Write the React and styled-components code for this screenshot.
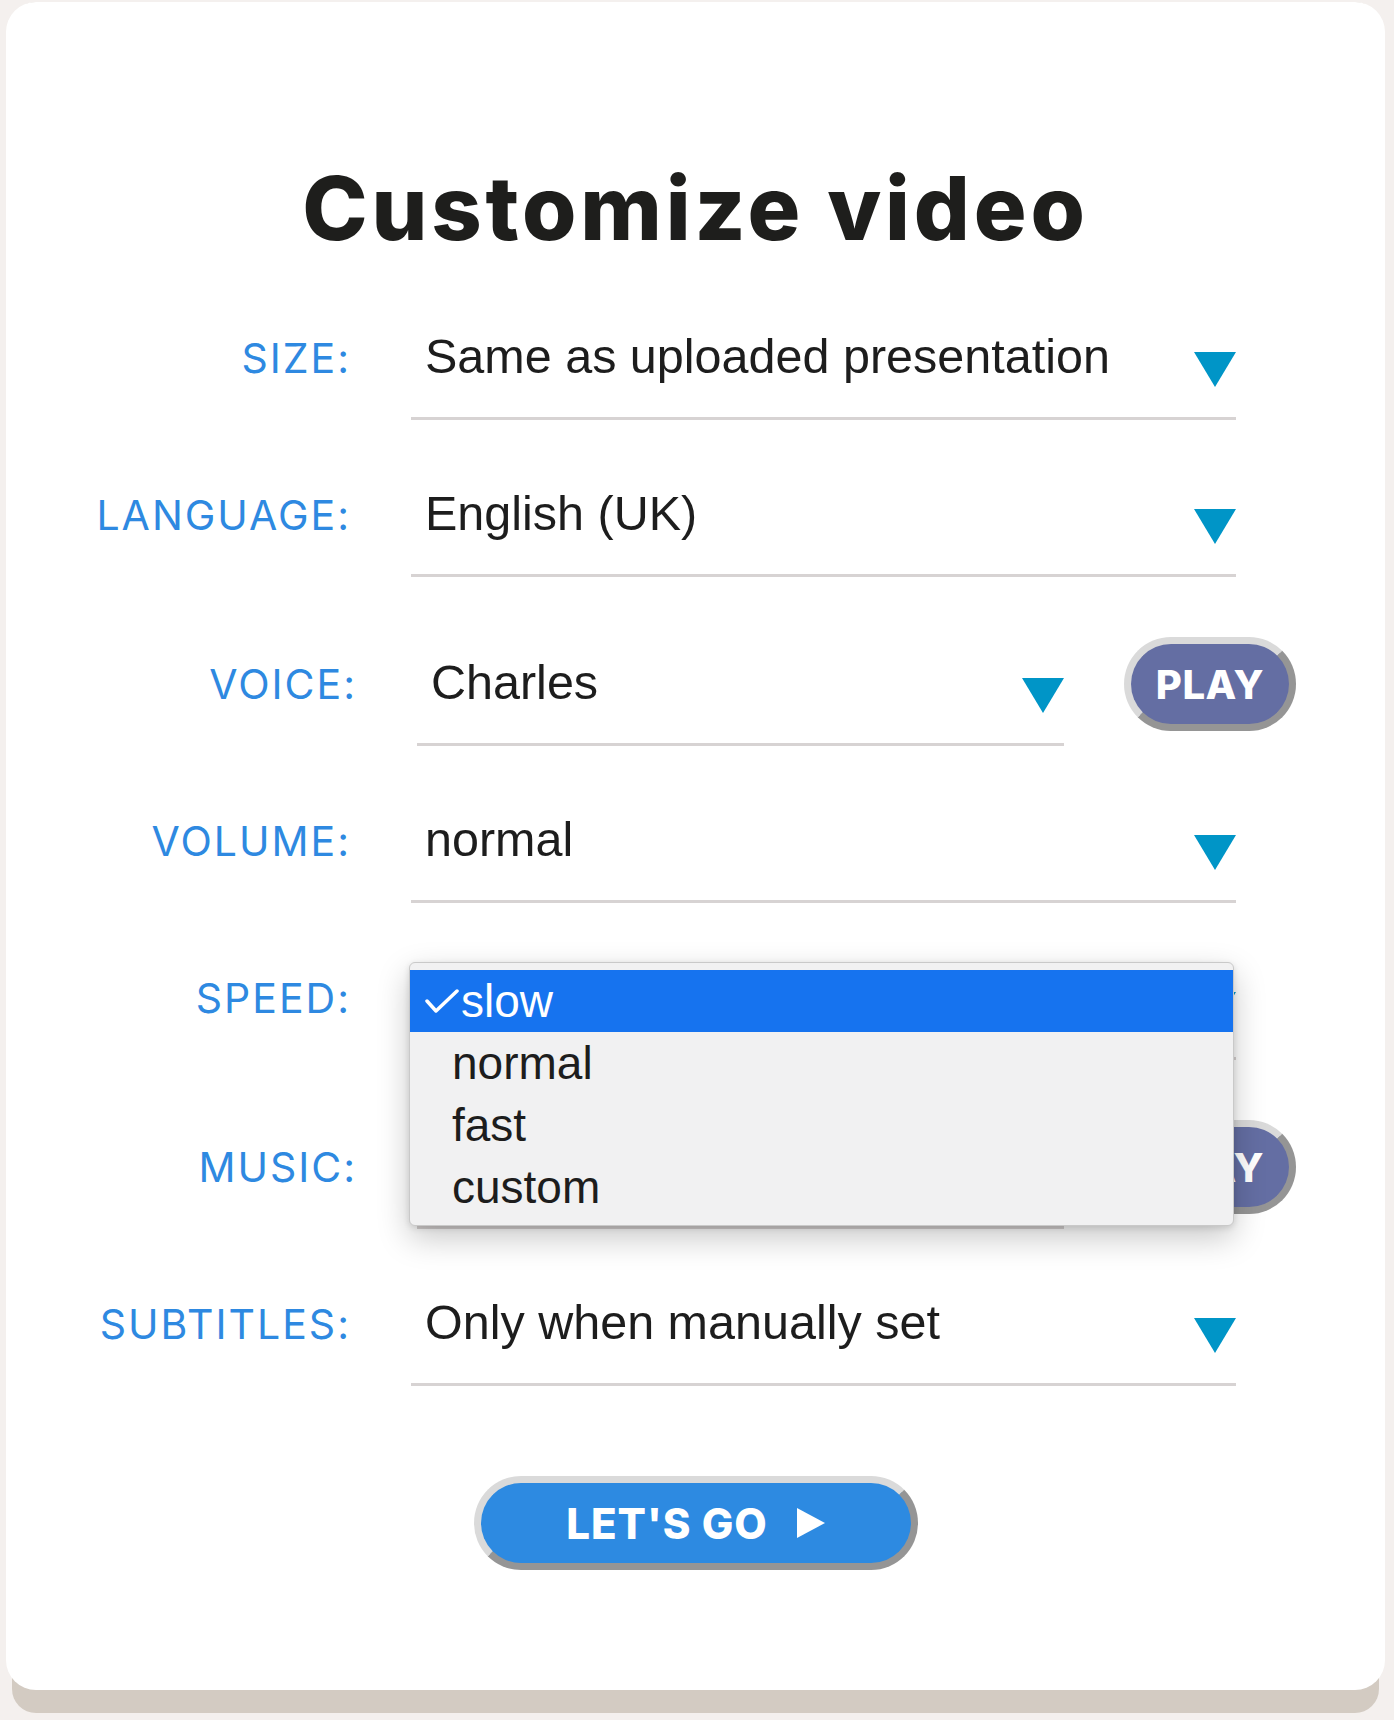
import React from 'react';
import styled, { createGlobalStyle } from 'styled-components';

const GlobalStyle = createGlobalStyle`
  html, body {
    margin: 0;
    padding: 0;
    background: #f4f0ee;
  }
  * {
    box-sizing: border-box;
  }
`;

const rows = [
  { label: 'SIZE:', value: 'Same as uploaded presentation' },
  { label: 'LANGUAGE:', value: 'English (UK)' },
  { label: 'VOICE:', value: 'Charles', play: true },
  { label: 'VOLUME:', value: 'normal' },
  { label: 'SPEED:', value: 'slow', options: ['slow', 'normal', 'fast', 'custom'] },
  { label: 'MUSIC:', value: 'Calm piano', play: true },
  { label: 'SUBTITLES:', value: 'Only when manually set' },
];

const Arrow = () => (
  <ArrowSvg viewBox="0 0 42 35">
    <polygon points="0,0 42,0 21,35" fill="#0095c7" />
  </ArrowSvg>
);

const Check = () => (
  <CheckSvg viewBox="0 0 34 24">
    <polyline
      points="2,12 11,22 32,2"
      fill="none"
      stroke="#ffffff"
      strokeWidth="3.5"
      strokeLinecap="round"
      strokeLinejoin="round"
    />
  </CheckSvg>
);

const App = () => {
  return (
    <>
      <GlobalStyle />
      <CardBase>
        <Card>
          <Title>Customize video</Title>
          <Form>
            {rows.map((row) => (
              <Row key={row.label} $play={row.play}>
                <Label>{row.label}</Label>
                <Select $play={row.play}>
                  <Value>{row.value}</Value>
                  <Arrow />
                  {row.options && (
                    <Menu>
                      {row.options.map((opt) => (
                        <Option key={opt} $selected={opt === row.value}>
                          {opt === row.value && <Check />}
                          {opt}
                        </Option>
                      ))}
                    </Menu>
                  )}
                </Select>
                {row.play && <PlayButton>PLAY</PlayButton>}
              </Row>
            ))}
          </Form>
          <GoButton>
            LET'S GO
            <GoArrow viewBox="0 0 28 30">
              <polygon points="0,0 28,15 0,30" fill="#ffffff" />
            </GoArrow>
          </GoButton>
        </Card>
      </CardBase>
    </>
  );
};

export default App;

// beige strip peeking out under the white card
const CardBase = styled.div`
  width: 1367px;
  margin: 2px 0 0 12px;
  padding-bottom: 23px;
  background: #d3cbc2;
  border-radius: 24px;
`;

const Card = styled.main`
  width: 1379px;
  margin-left: -6px;
  padding: 153px 0 120px 85px;
  background: #ffffff;
  border-radius: 30px;
  display: flex;
  flex-direction: column;
`;

const Title = styled.h1`
  margin: 0 0 2px -85px;
  font-family: Inter, 'Liberation Sans', sans-serif;
  font-weight: 800;
  font-size: 88px;
  line-height: 106px;
  letter-spacing: 3.8px;
  color: #1e1e1c;
  text-align: center;
`;

const Form = styled.div`
  display: flex;
  flex-direction: column;
`;

const Row = styled.div`
  display: flex;
  align-items: flex-end;
  height: ${({ $play }) => ($play ? 169 : 157)}px;
  padding-left: ${({ $play }) => ($play ? 6 : 0)}px;
`;

const Label = styled.div`
  width: 260px;
  margin: 0 60px 37px 0;
  text-align: right;
  font-family: Inter, 'Liberation Sans', sans-serif;
  font-size: 41px;
  line-height: 50px;
  letter-spacing: 2px;
  color: #2e89e1;
`;

const Select = styled.div`
  position: relative;
  display: flex;
  align-items: flex-end;
  justify-content: space-between;
  width: ${({ $play }) => ($play ? 647 : 825)}px;
  height: 97px;
  padding-left: 14px;
  border-bottom: 3px solid #d7d3d3;
`;

const Value = styled.span`
  margin-bottom: 33px;
  font-family: 'Liberation Sans', Arial, sans-serif;
  font-size: 48.5px;
  line-height: 56px;
  color: #1d1d1d;
  white-space: nowrap;
`;

const ArrowSvg = styled.svg`
  width: 42px;
  height: 35px;
  margin-bottom: 30px;
  flex-shrink: 0;
`;

const Menu = styled.div`
  position: absolute;
  left: -2px;
  top: -1px;
  width: 825px;
  padding: 7px 0 7px;
  background: #f1f1f2;
  border: 1px solid #c9c9c9;
  border-radius: 6px;
  box-shadow: 0 12px 32px rgba(0, 0, 0, 0.22), 0 2px 6px rgba(0, 0, 0, 0.12);
  z-index: 10;
`;

const Option = styled.div`
  display: flex;
  align-items: center;
  height: 62px;
  padding-left: ${({ $selected }) => ($selected ? 15 : 42)}px;
  background: ${({ $selected }) => ($selected ? '#1673ef' : 'transparent')};
  color: ${({ $selected }) => ($selected ? '#ffffff' : '#1d1d1d')};
  font-family: 'Liberation Sans', Arial, sans-serif;
  font-size: 46px;
  line-height: 62px;
`;

const CheckSvg = styled.svg`
  width: 34px;
  height: 24px;
  margin-right: 2px;
  flex-shrink: 0;
`;

const PillButton = styled.button`
  display: flex;
  align-items: center;
  justify-content: center;
  height: 94px;
  border: 7px solid;
  border-color: #dadada #959595 #959595 #dadada;
  border-radius: 47px;
  color: #ffffff;
  font-family: Inter, 'Liberation Sans', sans-serif;
  font-weight: 800;
  cursor: pointer;
`;

const PlayButton = styled(PillButton)`
  width: 172px;
  margin: 0 0 15px 60px;
  background: #646ea3;
  font-size: 40px;
  letter-spacing: 0.5px;
`;

const GoButton = styled(PillButton)`
  align-self: center;
  width: 444px;
  margin: 90px 0 0 -85px;
  background: #2d8ae1;
  font-size: 42px;
  letter-spacing: 1px;
  gap: 29px;
`;

const GoArrow = styled.svg`
  width: 28px;
  height: 30px;
`;
